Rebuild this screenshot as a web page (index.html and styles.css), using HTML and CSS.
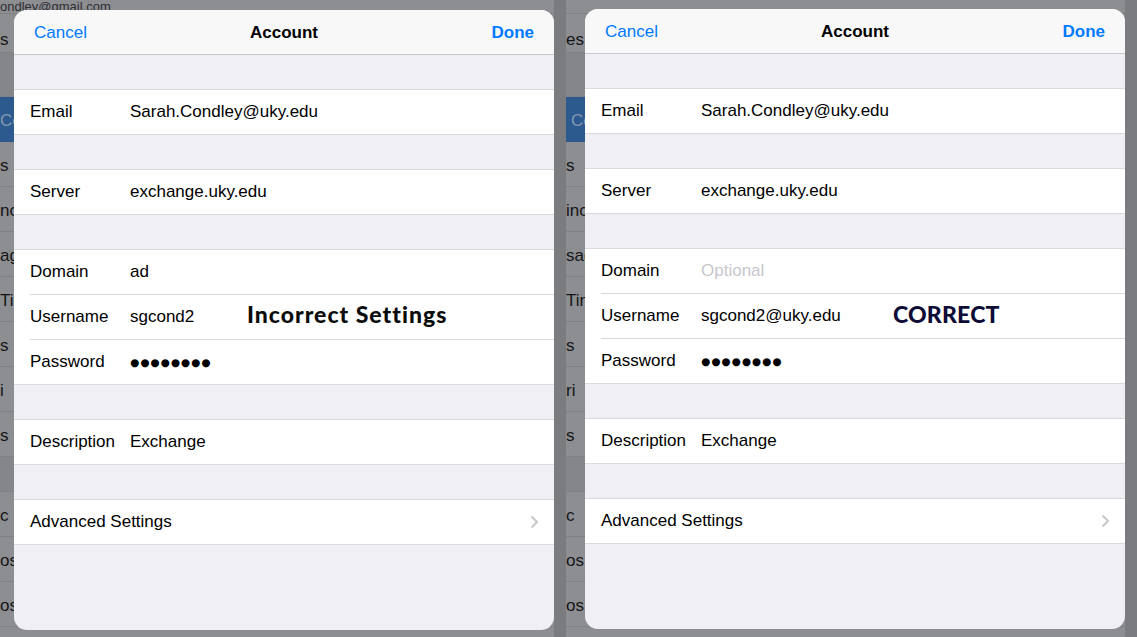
FILE: index.html
```html
<!DOCTYPE html>
<html lang="en">
<head>
    <meta charset="UTF-8">
    <title>Account Settings</title>
    <link rel="stylesheet" href="styles.css">
</head>
<body>

<!-- Left screenshot: wrong settings -->
<div class="shot shot-left">
    <div class="master">
        <div class="m-row m-top">ondley@gmail.com</div>
        <div class="m-row m-first">s</div>
        <div class="m-gap"></div>
        <div class="m-row m-active">Co</div>
        <div class="m-row">s</div>
        <div class="m-row">nc</div>
        <div class="m-row">ag</div>
        <div class="m-row">Tir</div>
        <div class="m-row">s</div>
        <div class="m-row">i</div>
        <div class="m-row">s</div>
        <div class="m-gap m-gap-sm"></div>
        <div class="m-row">c</div>
        <div class="m-row">os</div>
        <div class="m-row">os</div>
    </div>
    <div class="detail"></div>

    <div class="sheet">
        <div class="nav">
            <span class="nav-btn">Cancel</span>
            <span class="nav-title">Account</span>
            <span class="nav-btn nav-done">Done</span>
        </div>
        <div class="group">
            <div class="row"><span class="label">Email</span><span class="value">Sarah.Condley@uky.edu</span></div>
        </div>
        <div class="group">
            <div class="row"><span class="label">Server</span><span class="value">exchange.uky.edu</span></div>
        </div>
        <div class="group">
            <div class="row"><span class="label">Domain</span><span class="value">ad</span></div>
            <div class="row"><span class="label">Username</span><span class="value value-user">sgcond2</span><span class="note note-bad">Incorrect Settings</span></div>
            <div class="row"><span class="label">Password</span><span class="value dots">●●●●●●●●</span></div>
        </div>
        <div class="group">
            <div class="row"><span class="label">Description</span><span class="value">Exchange</span></div>
        </div>
        <div class="group">
            <div class="row">
                <span class="label label-wide">Advanced Settings</span>
                <svg class="chevron" width="9" height="14" viewBox="0 0 9 14"><polyline points="1.5,1.5 7,7 1.5,12.5" fill="none" stroke="#c7c7cc" stroke-width="2"/></svg>
            </div>
        </div>
    </div>
</div>

<!-- Right screenshot: correct settings -->
<div class="shot shot-right">
    <div class="master">
        <div class="m-row m-top"></div>
        <div class="m-row m-first">es</div>
        <div class="m-gap"></div>
        <div class="m-row m-active m-indent">Co</div>
        <div class="m-row">s</div>
        <div class="m-row">inc</div>
        <div class="m-row">sag</div>
        <div class="m-row">Tin</div>
        <div class="m-row">s</div>
        <div class="m-row">ri</div>
        <div class="m-row">s</div>
        <div class="m-gap m-gap-sm"></div>
        <div class="m-row">c</div>
        <div class="m-row">os</div>
        <div class="m-row">os</div>
    </div>
    <div class="detail"></div>

    <div class="sheet">
        <div class="nav">
            <span class="nav-btn">Cancel</span>
            <span class="nav-title">Account</span>
            <span class="nav-btn nav-done">Done</span>
        </div>
        <div class="group">
            <div class="row"><span class="label">Email</span><span class="value">Sarah.Condley@uky.edu</span></div>
        </div>
        <div class="group">
            <div class="row"><span class="label">Server</span><span class="value">exchange.uky.edu</span></div>
        </div>
        <div class="group">
            <div class="row"><span class="label">Domain</span><span class="value placeholder">Optional</span></div>
            <div class="row"><span class="label">Username</span><span class="value value-user-long">sgcond2@uky.edu</span><span class="note note-good">CORRECT</span></div>
            <div class="row"><span class="label">Password</span><span class="value dots">●●●●●●●●</span></div>
        </div>
        <div class="group">
            <div class="row"><span class="label">Description</span><span class="value">Exchange</span></div>
        </div>
        <div class="group">
            <div class="row">
                <span class="label label-wide">Advanced Settings</span>
                <svg class="chevron" width="9" height="14" viewBox="0 0 9 14"><polyline points="1.5,1.5 7,7 1.5,12.5" fill="none" stroke="#c7c7cc" stroke-width="2"/></svg>
            </div>
        </div>
    </div>
</div>

</body>
</html>
```

FILE: styles.css
```css
* { margin: 0; padding: 0; box-sizing: border-box; }
body { width: 1137px; height: 637px; overflow: hidden; display: flex; background-color: #7b7c80; font-family: 'Liberation Sans', Arial, sans-serif; }

/* Each half of the picture */
.shot { position: relative; display: flex; height: 637px; overflow: hidden; }
.shot-left { width: 566px; }
.shot-right { width: 571px; }

/* Dimmed settings list behind the sheet */
.master { flex: 1; background-color: #8d8e92; overflow: hidden; }
.m-row { height: 45px; display: flex; align-items: center; padding-top: 4px; border-bottom: 1px solid #808185; font-size: 17px; color: #151517; white-space: nowrap; }
.m-top { height: 14px; align-items: flex-start; padding-top: 0; font-size: 13px; color: #2e2f33; line-height: 13px; }
.m-first { height: 39px; padding-top: 14px; }
.m-gap { height: 44px; background-color: #85868a; border-bottom: 1px solid #808185; }
.m-gap-sm { height: 35px; }
.m-active { background-color: #2d5a8e; color: #8597b0; border-bottom-color: #2d5a8e; }
.m-indent { padding-left: 5px; }
.detail { width: 12px; background-color: #7b7c80; }

/* Modal sheet */
.sheet { position: absolute; left: 14px; top: 10px; width: 540px; height: 620px; background-color: #efeff4; border-radius: 13px; overflow: hidden; }
.shot-right .sheet { left: 19px; top: 9px; }

.nav { height: 45px; display: flex; align-items: center; justify-content: space-between; padding: 2px 20px 0; background-color: #f8f8f8; border-bottom: 1px solid #c8c7cc; font-size: 17px; }
.nav-btn { color: #007aff; width: 80px; }
.nav-done { font-weight: bold; text-align: right; }
.nav-title { font-weight: bold; color: #000; }

.group { margin-top: 34px; background-color: #fff; border-top: 1px solid #d9d9de; border-bottom: 1px solid #d9d9de; padding-left: 16px; }
.row { height: 44px; display: flex; align-items: center; font-size: 17px; color: #000; padding-right: 15px; }
.row + .row { border-top: 1px solid #d9d9de; height: 45px; }
.label { width: 100px; flex-shrink: 0; }
.label-wide { width: auto; flex: 1; }
.placeholder { color: #c7c7cd; }
.dots { font-family: 'DejaVu Sans', sans-serif; font-size: 10.5px; letter-spacing: 1px; }
.chevron { display: block; }

/* Annotation overlays */
.note { font-family: Lato, 'DejaVu Sans', sans-serif; font-weight: 900; font-size: 23px; margin-bottom: 6px; }
.value-user { width: 117px; }
.value-user-long { width: 192px; }
.note-bad { color: #0c0c0c; letter-spacing: 1px; }
.note-good { color: #0c0c36; letter-spacing: 0.2px; margin-bottom: 4px; }
```
